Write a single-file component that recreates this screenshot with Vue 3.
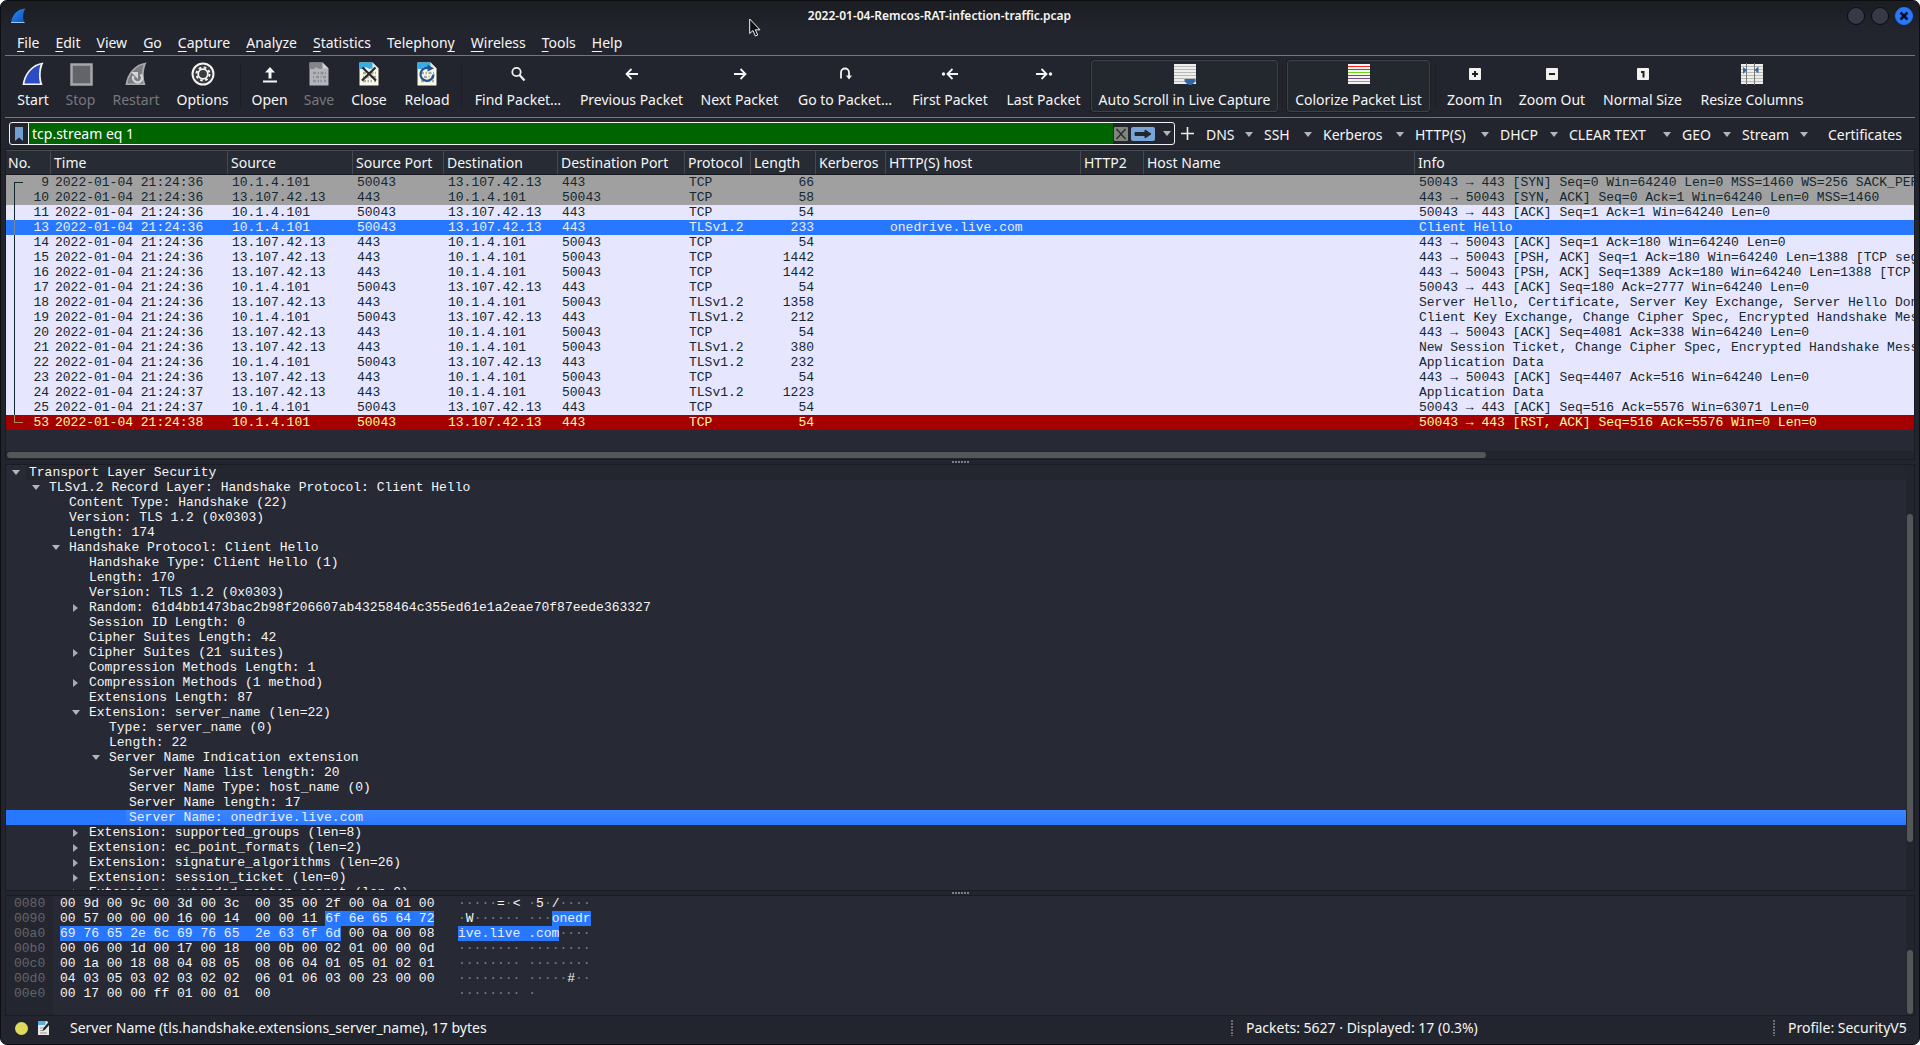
<script setup>
const menus = [
  ['', 'F', 'ile'], ['', 'E', 'dit'], ['', 'V', 'iew'], ['', 'G', 'o'], ['', 'C', 'apture'],
  ['', 'A', 'nalyze'], ['', 'S', 'tatistics'], ['Telephon', 'y', ''], ['', 'W', 'ireless'],
  ['', 'T', 'ools'], ['', 'H', 'elp'],
]

const tools = [
  { icon: 'start', label: 'Start', w: 48 },
  { icon: 'stop', label: 'Stop', w: 47, off: true },
  { icon: 'restart', label: 'Restart', w: 64, off: true },
  { icon: 'options', label: 'Options', w: 69 },
  { sep: true, w: 6 },
  { icon: 'open', label: 'Open', w: 53 },
  { icon: 'save', label: 'Save', w: 46, off: true },
  { icon: 'close', label: 'Close', w: 54 },
  { icon: 'reload', label: 'Reload', w: 62 },
  { sep: true, w: 7 },
  { icon: 'find', label: 'Find Packet…', w: 106 },
  { icon: 'prev', label: 'Previous Packet', w: 121 },
  { icon: 'next', label: 'Next Packet', w: 95 },
  { icon: 'goto', label: 'Go to Packet…', w: 116 },
  { icon: 'first', label: 'First Packet', w: 94 },
  { icon: 'last', label: 'Last Packet', w: 93 },
  { icon: 'scroll', label: 'Auto Scroll in Live Capture', w: 189, on: true },
  { sep: true, w: 7 },
  { icon: 'color', label: 'Colorize Packet List', w: 145, on: true },
  { sep: true, w: 8 },
  { icon: 'plus', label: 'Zoom In', w: 71 },
  { icon: 'minus', label: 'Zoom Out', w: 84 },
  { icon: 'one', label: 'Normal Size', w: 97 },
  { icon: 'resize', label: 'Resize Columns', w: 122 },
]

const shortcuts = [
  { label: 'DNS', w: 58 }, { label: 'SSH', w: 59 }, { label: 'Kerberos', w: 92 },
  { label: 'HTTP(S)', w: 85 }, { label: 'DHCP', w: 69 }, { label: 'CLEAR TEXT', w: 113 },
  { label: 'GEO', w: 60 }, { label: 'Stream', w: 77 },
]

const columns = [
  ['No.', 45], ['Time', 177], ['Source', 125], ['Source Port', 91], ['Destination', 114],
  ['Destination Port', 127], ['Protocol', 66], ['Length', 65], ['Kerberos', 70],
  ['HTTP(S) host', 195], ['HTTP2', 63], ['Host Name', 271], ['Info', 0],
]

const CLIENT = '10.1.4.101'
const SERVER = '13.107.42.13'
// [number, second, sent by client, protocol, length, info, row style]
const packets = [
  [9, 36, 1, 'TCP', 66, '50043 → 443 [SYN] Seq=0 Win=64240 Len=0 MSS=1460 WS=256 SACK_PERM=1', 'syn'],
  [10, 36, 0, 'TCP', 58, '443 → 50043 [SYN, ACK] Seq=0 Ack=1 Win=64240 Len=0 MSS=1460', 'syn'],
  [11, 36, 1, 'TCP', 54, '50043 → 443 [ACK] Seq=1 Ack=1 Win=64240 Len=0'],
  [13, 36, 1, 'TLSv1.2', 233, 'Client Hello', 'selected'],
  [14, 36, 0, 'TCP', 54, '443 → 50043 [ACK] Seq=1 Ack=180 Win=64240 Len=0'],
  [15, 36, 0, 'TCP', 1442, '443 → 50043 [PSH, ACK] Seq=1 Ack=180 Win=64240 Len=1388 [TCP segment of a reassembled PDU]'],
  [16, 36, 0, 'TCP', 1442, '443 → 50043 [PSH, ACK] Seq=1389 Ack=180 Win=64240 Len=1388 [TCP segment of a reassembled PDU]'],
  [17, 36, 1, 'TCP', 54, '50043 → 443 [ACK] Seq=180 Ack=2777 Win=64240 Len=0'],
  [18, 36, 0, 'TLSv1.2', 1358, 'Server Hello, Certificate, Server Key Exchange, Server Hello Done'],
  [19, 36, 1, 'TLSv1.2', 212, 'Client Key Exchange, Change Cipher Spec, Encrypted Handshake Message'],
  [20, 36, 0, 'TCP', 54, '443 → 50043 [ACK] Seq=4081 Ack=338 Win=64240 Len=0'],
  [21, 36, 0, 'TLSv1.2', 380, 'New Session Ticket, Change Cipher Spec, Encrypted Handshake Message'],
  [22, 36, 1, 'TLSv1.2', 232, 'Application Data'],
  [23, 36, 0, 'TCP', 54, '443 → 50043 [ACK] Seq=4407 Ack=516 Win=64240 Len=0'],
  [24, 37, 0, 'TLSv1.2', 1223, 'Application Data'],
  [25, 37, 1, 'TCP', 54, '50043 → 443 [ACK] Seq=516 Ack=5576 Win=63071 Len=0'],
  [53, 38, 1, 'TCP', 54, '50043 → 443 [RST, ACK] Seq=516 Ack=5576 Win=0 Len=0', 'reset'],
].map(([no, sec, out, proto, len, info, kind]) => ({
  kind: kind || 'tcp',
  cells: [
    no, `2022-01-04 21:24:${sec}`,
    out ? CLIENT : SERVER, out ? '50043' : '443',
    out ? SERVER : CLIENT, out ? '443' : '50043',
    proto, len, '', kind === 'selected' ? 'onedrive.live.com' : '', '', '', info,
  ],
}))

// [depth, text, arrow]
const tree = [
  [0, 'Transport Layer Security', 'open'],
  [1, 'TLSv1.2 Record Layer: Handshake Protocol: Client Hello', 'open'],
  [2, 'Content Type: Handshake (22)'],
  [2, 'Version: TLS 1.2 (0x0303)'],
  [2, 'Length: 174'],
  [2, 'Handshake Protocol: Client Hello', 'open'],
  [3, 'Handshake Type: Client Hello (1)'],
  [3, 'Length: 170'],
  [3, 'Version: TLS 1.2 (0x0303)'],
  [3, 'Random: 61d4bb1473bac2b98f206607ab43258464c355ed61e1a2eae70f87eede363327', 'shut'],
  [3, 'Session ID Length: 0'],
  [3, 'Cipher Suites Length: 42'],
  [3, 'Cipher Suites (21 suites)', 'shut'],
  [3, 'Compression Methods Length: 1'],
  [3, 'Compression Methods (1 method)', 'shut'],
  [3, 'Extensions Length: 87'],
  [3, 'Extension: server_name (len=22)', 'open'],
  [4, 'Type: server_name (0)'],
  [4, 'Length: 22'],
  [4, 'Server Name Indication extension', 'open'],
  [5, 'Server Name list length: 20'],
  [5, 'Server Name Type: host_name (0)'],
  [5, 'Server Name length: 17'],
  [5, 'Server Name: onedrive.live.com'],
  [3, 'Extension: supported_groups (len=8)', 'shut'],
  [3, 'Extension: ec_point_formats (len=2)', 'shut'],
  [3, 'Extension: signature_algorithms (len=26)', 'shut'],
  [3, 'Extension: session_ticket (len=0)', 'shut'],
  [3, 'Extension: extended_master_secret (len=0)', 'shut'],
]
const selectedField = 23

// Packet bytes from offset 0x80 on, sixteen to a line
const bytes = [
  '009d009c003d003c0035002f000a0100',
  '00570000001600140000116f6e656472',
  '6976652e6c6976652e636f6d000a0008',
  '0006001d00170018000b00020100000d',
  '001a0018080408050806040105010201',
  '04030503020302020601060300230000',
  '00170000ff01000100',
]
// Highlighted byte range of each line
const marks = [[16, 16], [11, 16], [0, 12], [16, 16], [16, 16], [16, 16], [16, 16]]
const dump = bytes.map((line, r) => {
  const list = line.match(/../g)
  const [from, to] = marks[r]
  const hex = [], text = []
  const push = (arr, t, k) => {
    const last = arr[arr.length - 1]
    if (last && last.k === k) last.t += t
    else arr.push({ t, k })
  }
  list.forEach((b, i) => {
    const on = i >= from && i < to
    const before = on && i > from
    if (i) push(hex, i === 8 ? '  ' : ' ', before ? 'mark' : '')
    push(hex, b, on ? 'mark' : '')
    if (i === 8) push(text, ' ', before ? 'mark' : '')
    const code = parseInt(b, 16)
    const shown = code > 32 && code < 127
    push(text, shown ? String.fromCharCode(code) : '·', on ? 'mark' : shown ? '' : 'dot')
  })
  return { offset: '00' + ((r + 8) * 16).toString(16), hex, text }
})
</script>

<template>
  <div class="window">
    <header class="title">
      <svg class="fin" viewBox="0 0 16 16" aria-hidden="true">
        <defs>
          <linearGradient id="blue" x1="0" y1="0" x2="1" y2="1">
            <stop offset="0" stop-color="#2a8df0" /><stop offset="1" stop-color="#0a4fc0" />
          </linearGradient>
        </defs>
        <path d="M1 15C2 7 7 1 15.500 .500 12.500 5 12.500 10 14.500 15Z" fill="url(#blue)" />
        <path d="M1 14.500H14.500" stroke="#9cc4ee" />
      </svg>
      <h1>2022-01-04-Remcos-RAT-infection-traffic.pcap</h1>
      <div class="winbtns">
        <button aria-label="Minimize"></button>
        <button aria-label="Maximize"></button>
        <button class="x" aria-label="Close window">
          <svg viewBox="0 0 10 10"><path d="M1.500 1.500l7 7M8.500 1.500l-7 7" stroke="#0a1224" stroke-width="2.600" /></svg>
        </button>
      </div>
    </header>

    <nav class="menubar">
      <button v-for="m in menus" :key="m.join('')">{{ m[0] }}<u>{{ m[1] }}</u>{{ m[2] }}</button>
    </nav>

    <div class="toolbar">
      <template v-for="(t, i) in tools" :key="i">
        <span v-if="t.sep" class="sep" :style="{ width: t.w + 'px' }"></span>
        <div v-else class="slot" :style="{ width: t.w + 'px' }">
          <button :class="{ on: t.on }" :disabled="t.off">
            <svg viewBox="0 0 24 24" aria-hidden="true">
              <template v-if="t.icon === 'start'">
                <path d="M1.500 23C3 12 10 2 22.500 .500 19 8 19 16 21.500 23Z" fill="#f4f4f2" />
                <path d="M3.500 21.500C5 12.500 11 5 19.500 2.500 17.500 9 17.500 15 19 21.500Z" fill="#2d4bc4" />
              </template>
              <template v-else-if="t.icon === 'stop'">
                <rect x="2.500" y="2.500" width="20" height="20" fill="#636469" stroke="#a6a7aa" stroke-width="2.500" />
              </template>
              <template v-else-if="t.icon === 'restart'">
                <path d="M1.500 23C3 12 10 2 22.500 .500 19 8 19 16 21.500 23Z" fill="#a9aaad" />
                <path d="M3.500 21.500C5 12.500 11 5 19.500 2.500 17.500 9 17.500 15 19 21.500Z" fill="#7b7c82" />
                <path d="M16.500 12.500A4.500 4.500 0 1 1 9.500 14" fill="none" stroke="#d4d5d8" stroke-width="2.400" />
                <path d="M7 10h7v7z" fill="#d4d5d8" />
              </template>
              <template v-else-if="t.icon === 'options'">
                <circle cx="12" cy="12" r="10.500" fill="#3a3b3e" stroke="#f4f4f2" stroke-width="2" />
                <circle cx="12" cy="12" r="6.500" fill="none" stroke="#f4f4f2" stroke-width="2" stroke-dasharray="2.600 2.500" />
                <circle cx="12" cy="12" r="4.800" fill="#3a3b3e" stroke="#f4f4f2" stroke-width="1.800" />
              </template>
              <template v-else-if="t.icon === 'open'">
                <path d="M5 18.500h14v2H5zM10.500 16.500v-6H7l5-5.500 5 5.500h-3.500v6z" fill="#f4f4f2" />
              </template>
              <template v-else-if="['save', 'close', 'reload'].includes(t.icon)">
                <path d="M2.500 .500h13l6 6v17h-19z" :fill="t.off ? '#b4b5ba' : '#fafae8'" />
                <path d="M2.500 .500h13l2 5.500-5 1-4-2-1 2h-5z" :fill="t.off ? '#84858c' : '#35aee8'" />
                <path d="M15.500 .500l6 6h-6z" :fill="t.off ? '#d0d1d5' : '#e8e8dc'" />
                <path d="M6 11h3M10.500 11h1.500M13.500 11h3M18 11h1M6 15h1M9 15h3M13.500 15h1M16 15h3M6 19h3M10.500 19h1.500M13.500 19h1.500M17 19h2" :stroke="t.off ? '#8e8f95' : '#a9aaa5'" stroke-width="2.400" />
                <path v-if="t.icon === 'close'" d="M5.500 5.500l13.500 13M18.500 5.500l-13.500 13" stroke="#25272b" stroke-width="2.200" />
                <template v-if="t.icon === 'reload'">
                  <path d="M13.500 6A6.500 6.500 0 1 0 18.500 12.500" fill="none" stroke="#274f94" stroke-width="2.300" />
                  <path d="M12.500 2.500l6.500 4-6.500 3z" fill="#274f94" />
                </template>
              </template>
              <template v-else-if="t.icon === 'find'">
                <circle cx="10.500" cy="10" r="4.200" fill="none" stroke="#f0f0ee" stroke-width="1.800" />
                <path d="M13.500 13l5 5.500" stroke="#f0f0ee" stroke-width="2.200" />
              </template>
              <g v-else-if="['prev', 'next', 'goto', 'first', 'last'].includes(t.icon)" fill="none" stroke="#f4f4f2" stroke-width="1.800">
                <path v-if="t.icon === 'prev'" d="M18 12H7M11.500 7l-5 5 5 5" />
                <path v-if="t.icon === 'next'" d="M6 12h11M12.500 7l5 5-5 5" />
                <path v-if="t.icon === 'goto'" d="M8 16.500V10.500a4 4 0 0 1 8 0V14" />
                <path v-if="t.icon === 'goto'" d="M13 13.500h6L16 17.500z" fill="#f4f4f2" stroke="none" />
                <path v-if="t.icon === 'first'" d="M20 12H9.500M14.500 7l-5 5 5 5" />
                <circle v-if="t.icon === 'first'" cx="5.500" cy="12" r="1.700" fill="#f4f4f2" stroke="none" />
                <path v-if="t.icon === 'last'" d="M4 12h10.500M9.500 7l5 5-5 5" />
                <circle v-if="t.icon === 'last'" cx="18.500" cy="12" r="1.700" fill="#f4f4f2" stroke="none" />
              </g>
              <template v-else-if="t.icon === 'scroll'">
                <path d="M1 2h22v20H1z" fill="#eeeeec" />
                <path d="M1 4.500h22M1 7.500h22M1 10.500h22M1 13.500h22M1 16.500h22M1 19.500h22" stroke="#b9bab6" />
                <path d="M11.500 17h11v2.500l-4 3.500h-3l-4-3.500z" fill="#3465a4" />
              </template>
              <template v-else-if="t.icon === 'color'">
                <path d="M1 2h22v20H1z" fill="#f2f2f0" />
                <path d="M1 4.500h22" stroke="#ef2929" /><path d="M1 7.500h22" stroke="#3465a4" />
                <path d="M1 10.500h22" stroke="#73d216" /><path d="M1 13.500h22" stroke="#3465a4" />
                <path d="M1 16.500h22" stroke="#75507b" /><path d="M1 19.500h22" stroke="#c4a000" />
              </template>
              <template v-else-if="t.icon === 'resize'">
                <path d="M1 2h22v20H1z" fill="#eeeeec" />
                <path d="M1 4.500h22M1 7.500h22M1 10.500h22M1 13.500h22M1 16.500h22M1 19.500h22" stroke="#b9bab6" />
                <path d="M6.500 1v22M14.500 1v22" stroke="#777875" />
                <path d="M3 5l4 3-4 4zM18.500 4.500v7l-4-3.500z" fill="#3465a4" />
              </template>
              <template v-else>
                <rect x="6" y="6" width="12" height="12" rx="1" fill="#f2f2f0" />
                <path v-if="t.icon === 'plus'" d="M9 12h6M12 9v6" stroke="#1e2026" stroke-width="2" />
                <path v-if="t.icon === 'minus'" d="M9 12h6" stroke="#1e2026" stroke-width="2" />
                <path v-if="t.icon === 'one'" d="M10 10h2.500v5.500" fill="none" stroke="#1e2026" stroke-width="2" />
              </template>
            </svg>
            <span>{{ t.label }}</span>
          </button>
        </div>
      </template>
    </div>

    <div class="filterbar">
      <div class="field">
        <button class="mark-btn" aria-label="Bookmarks">
          <svg viewBox="0 0 8 14"><path d="M0 0h8v14l-4-3.500L0 14z" fill="#729fcf" /></svg>
        </button>
        <input type="text" value="tcp.stream eq 1" aria-label="Display filter" />
        <button class="clear" aria-label="Clear filter">
          <svg viewBox="0 0 14 14"><path d="M2.500 2l9 10M11.500 2l-9 10" stroke="#2c2e30" stroke-width="1.500" /></svg>
        </button>
        <button class="apply" aria-label="Apply filter">
          <svg viewBox="0 0 24 14"><path d="M4 5.500h10V3l6 4-6 4V8.500H4z" fill="#23272f" stroke="#23272f" stroke-linejoin="round" /></svg>
        </button>
        <button class="more" aria-label="Filter history"><i class="down"></i></button>
      </div>
      <button class="add" aria-label="Add filter button">
        <svg viewBox="0 0 13 13"><path d="M6.500 0v13M0 6.500h13" stroke="#eeeeec" stroke-width="1.600" /></svg>
      </button>
      <button v-for="s in shortcuts" :key="s.label" class="short" :style="{ width: s.w + 'px' }">
        {{ s.label }}<i class="down"></i>
      </button>
      <button class="short wide">Certificates</button>
    </div>

    <main class="panes">
      <section class="pane list">
        <table>
          <colgroup>
            <col v-for="c in columns" :key="c[0]" :style="c[1] ? { width: c[1] + 'px' } : {}" />
          </colgroup>
          <thead>
            <tr><th v-for="c in columns" :key="c[0]" scope="col">{{ c[0] }}</th></tr>
          </thead>
          <tbody>
            <tr v-for="p in packets" :key="p.cells[0]" :class="p.kind">
              <td v-for="(c, i) in p.cells" :key="i">{{ c }}</td>
            </tr>
          </tbody>
        </table>
        <div class="hscroll"><span></span></div>
      </section>

      <div class="grip"><i></i></div>

      <section class="pane details">
        <ul class="tree">
          <li v-for="(n, i) in tree" :key="i" :class="{ selected: i === selectedField, current: i === 0 }">
            <span class="branch" :style="{ width: n[0] * 20 + 20 + 'px' }"><i v-if="n[2]" :class="n[2]"></i></span>
            <span class="label">{{ n[1] }}</span>
          </li>
        </ul>
        <div class="vscroll"><span></span></div>
      </section>

      <div class="grip"><i></i></div>

      <section class="pane hex">
        <div class="dump">
          <div v-for="d in dump" :key="d.offset" class="line">
            <span class="offset">{{ d.offset }}</span>
            <span class="hexcol"><span v-for="(s, i) in d.hex" :key="i" :class="s.k">{{ s.t }}</span></span>
            <span class="textcol"><span v-for="(s, i) in d.text" :key="i" :class="s.k">{{ s.t }}</span></span>
          </div>
        </div>
        <div class="vscroll"><span></span></div>
      </section>
    </main>

    <footer class="status">
      <button class="expert" aria-label="Expert information"></button>
      <button class="note" aria-label="Capture file comment">
        <svg viewBox="0 0 14 16">
          <path d="M1 1h9l2 3v11H1z" fill="#e9eae6" /><path d="M1 1h8l-1 4H1z" fill="#4fb0e2" />
          <path d="M3 8h4M3 10.500h3M3 13h7" stroke="#9b9c98" />
          <path d="M5.500 11l1-3L12 1.500l1.800 1.500L8 9.800z" fill="#1f2227" />
        </svg>
      </button>
      <span class="msg">Server Name (tls.handshake.extensions_server_name), 17 bytes</span>
      <span class="cell packets">Packets: 5627 · Displayed: 17 (0.3%)</span>
      <span class="cell profile">Profile: SecurityV5</span>
    </footer>

    <svg class="pointer" viewBox="0 0 12 19" aria-hidden="true">
      <path d="M.700 1v14.500l3.300-3 2.300 5.500 2.400-1-2.300-5.200h4.600z" fill="#0c0d10" stroke="#f4f4f4" />
    </svg>
  </div>
</template>

<style>
body { background: #fff; }
</style>

<style scoped>
* { box-sizing: border-box; }
.window {
  position: relative;
  height: 100vh;
  display: flex;
  flex-direction: column;
  overflow: hidden;
  border: 1px solid #0d0e12;
  border-radius: 7px;
  background: #23252e;
  color: #f6f6f6;
  font: 14px/20px "Noto Sans", sans-serif;
}
button {
  margin: 0;
  padding: 0;
  border: 0;
  background: none;
  color: inherit;
  font: inherit;
  white-space: nowrap;
}
svg { display: block; }

.title {
  display: flex;
  align-items: center;
  height: 30px;
  padding: 0 6px 0 9px;
  background: linear-gradient(#1b1d23, #23252e);
}
.fin { width: 16px; height: 16px; margin-right: 6px; }
.title h1 {
  flex: 1;
  margin: 0;
  text-align: center;
  font-size: 12px;
  font-weight: 600;
}
.winbtns { display: flex; gap: 6px; }
.winbtns button {
  width: 18px;
  height: 18px;
  border: 1px solid #0b0c0f;
  border-radius: 50%;
  background: #373a46;
}
.winbtns .x { display: grid; place-items: center; border-color: #2777ff; background: #2777ff; }
.winbtns svg { width: 10px; height: 10px; }

.menubar {
  display: flex;
  height: 25px;
  margin: 0 4px;
  padding: 0 4px;
  border-bottom: 1px solid #75767b;
}
.menubar button { height: 24px; padding: 0 8px; }
.menubar u { text-underline-offset: 3px; }

.toolbar {
  display: flex;
  height: 62px;
  margin: 0 4px;
  padding: 4px 4px 5px;
  border-bottom: 1px solid #75767b;
}
.slot { flex: none; padding: 0 1px; }
.slot button {
  width: 100%;
  height: 52px;
  display: flex;
  flex-direction: column;
  align-items: center;
  gap: 4px;
  padding-top: 1px;
  border: 1px solid transparent;
  border-radius: 3px;
}
.slot svg { width: 24px; height: 24px; }
.slot button:disabled { color: #77787d; }
.slot button.on { border-color: #3e414a; background: #23272e; box-shadow: 0 0 0 1px #1b1d23; }
.sep { flex: none; display: flex; justify-content: center; padding: 4px 0; }
.sep::before { content: ""; width: 1px; background: #1c1e24; }

.filterbar { display: flex; align-items: center; height: 31px; padding: 0 6px 0 8px; }
.field {
  flex: 1;
  min-width: 0;
  display: flex;
  align-items: center;
  height: 23px;
  border: 1px solid #f2f2f2;
  border-radius: 3px;
}
.field input {
  flex: 1;
  min-width: 0;
  height: 21px;
  padding: 0 3px;
  border: 0;
  border-left: 1px solid #f2f2f2;
  border-radius: 0;
  outline: 0;
  background: #006400;
  color: #fff;
  font: inherit;
}
.mark-btn { width: 18px; display: flex; justify-content: center; }
.mark-btn svg { width: 8px; height: 14px; }
.clear { width: 14px; height: 14px; margin-left: 1px; border-radius: 1px; background: #82847e; }
.apply { width: 24px; height: 14px; margin-left: 3px; border-radius: 2px; background: #79a6d8; }
.clear svg { width: 14px; height: 14px; }
.apply svg { width: 24px; height: 14px; }
.more { width: 19px; display: flex; justify-content: center; padding-left: 4px; }
.down, .open { border: 4px solid transparent; border-top: 5px solid #b4b5b8; border-bottom: 0; }
.shut { margin-right: 2px; border: 4px solid transparent; border-left: 5px solid #a9aaae; border-right: 0; }
.add { width: 31px; display: flex; padding-left: 6px; }
.add svg { width: 13px; height: 13px; }
.short { flex: none; display: flex; align-items: center; justify-content: space-between; padding: 2px 11px 0 0; }
.short.wide { width: 94px; padding-left: 9px; }

.panes { flex: 1; min-height: 0; display: flex; flex-direction: column; margin: 0 4px; }
.pane { border: 1px solid #1a1c22; background: #272a34; font: 13px/15px "Liberation Mono", monospace; }
.list { flex: none; }
table { width: 100%; table-layout: fixed; border-collapse: collapse; }
th {
  height: 24px;
  padding: 0 0 0 3px;
  border-top: 1px solid #464950;
  border-bottom: 1px solid #17191e;
  background: #272b33;
  box-shadow: inset -1px 0 #464950;
  text-align: left;
  white-space: nowrap;
  font: 14px/20px "Noto Sans", sans-serif;
}
th:first-child { padding-left: 2px; }
th:last-child { box-shadow: none; }
td { height: 15px; padding: 0 2px 0 4px; overflow: hidden; white-space: nowrap; }
td:first-child, td:nth-child(8) { text-align: right; }
td:first-child { position: relative; }
.tcp { background: #e7e6ff; color: #12272e; }
.syn { background: #a0a0a0; color: #12272e; }
.selected { background: #2777ff; color: #e8efff; }
.reset { background: #a40000; color: #fffc9c; }
tbody td:first-child::before {
  content: "";
  position: absolute;
  left: 8px;
  top: 0;
  bottom: 0;
  width: 8px;
  border-left: 1px solid #12272e;
}
tbody .selected td:first-child::before { border-color: #7c8698; }
tbody tr:first-child td:first-child::before { top: 7px; border-top: 1px solid #12272e; }
tbody tr:last-child td:first-child::before { bottom: 7px; border-left-color: #b08a58; border-bottom: 1px solid #b08a58; }
.hscroll { margin-top: 21px; padding: 1px; background: #23252e; }
.hscroll span { display: block; width: calc(77% + 11px); height: 6px; border-radius: 3px; background: #555658; }

.grip { flex: none; height: 4px; display: flex; align-items: center; justify-content: center; }
.grip i { width: 17px; height: 2px; background: repeating-linear-gradient(90deg, #7c7d82 0 2px, transparent 2px 3px); }

.details { flex: 1; min-height: 0; display: flex; }
.tree { flex: 1; margin: 0; padding: 0; overflow: hidden; list-style: none; }
.tree li { display: flex; height: 15px; white-space: pre; }
.branch { flex: none; display: flex; align-items: center; justify-content: flex-end; padding-right: 6px; }
.label { flex: 1; padding-left: 3px; }
.current .label { background: #23262e; }
.tree .selected .label { background: linear-gradient(#3d86ff, #2b79ff); }
.vscroll { flex: none; width: 8px; display: flex; flex-direction: column; padding: 0 1px; background: #23252e; }
.vscroll::before { content: ""; flex: 49; }
.vscroll::after { content: ""; flex: 48; }
.vscroll span { flex: 329; border-radius: 3px; background: #555658; }

.hex { flex: none; display: flex; }
.dump { flex: 1; display: flex; flex-direction: column; }
.dump::after { content: ""; width: 47px; height: 14px; background: #23262f; }
.line { display: flex; height: 15px; white-space: pre; }
.offset { width: 47px; padding-left: 8px; background: #23262f; color: #63656c; }
.hexcol { width: 398px; padding-left: 7px; }
.textcol { padding-left: 7px; }
.mark { display: inline-block; height: 15px; background: #2777ff; color: #e8efff; }
.dot { color: #7a7c83; }
.hex .vscroll::before { flex: 54; }
.hex .vscroll::after { flex: 1; }
.hex .vscroll span { flex: 63; }

.status { display: flex; align-items: center; height: 28px; padding: 0 9px 4px 14px; }
.expert { width: 13px; height: 13px; border-radius: 50%; background: #dedb5c; }
.note { margin-left: 9px; }
.note svg { width: 14px; height: 16px; }
.msg { flex: 1; padding-left: 19px; white-space: nowrap; }
.cell { display: flex; align-items: center; white-space: nowrap; }
.cell::before {
  content: "";
  width: 2px;
  height: 16px;
  margin-right: 13px;
  background: repeating-linear-gradient(#6c6d73 0 2px, transparent 2px 3px);
}
.packets { width: 542px; }
.profile { width: 137px; }

.pointer { position: absolute; left: 748px; top: 17px; width: 12px; height: 19px; }
</style>
